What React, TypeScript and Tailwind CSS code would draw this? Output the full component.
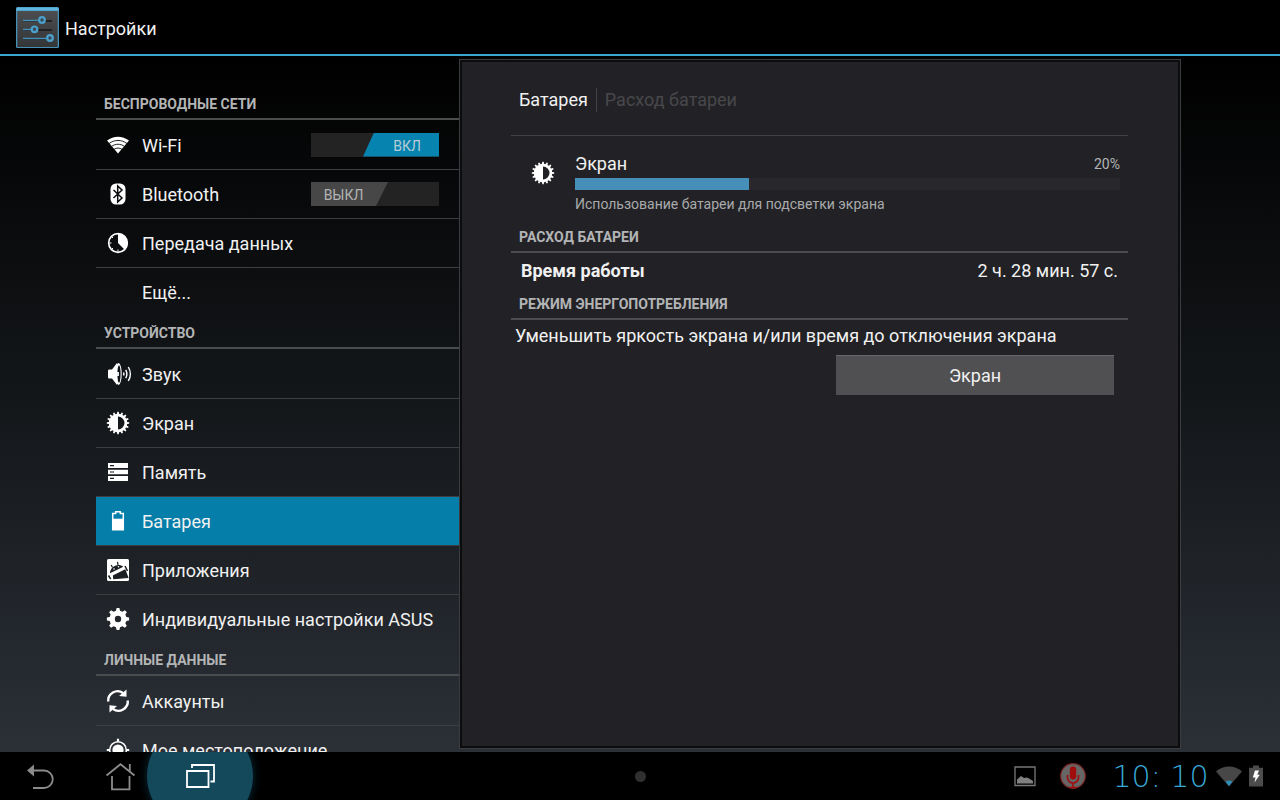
import type { ReactNode } from "react";

type Item = {
  title: string;
  icon?: string;
  toggle?: "on" | "off";
  active?: boolean;
};

const sections: { title: string; items: Item[] }[] = [
  {
    title: "БЕСПРОВОДНЫЕ СЕТИ",
    items: [
      { title: "Wi-Fi", icon: "wifi", toggle: "on" },
      { title: "Bluetooth", icon: "bluetooth", toggle: "off" },
      { title: "Передача данных", icon: "data" },
      { title: "Ещё..." },
    ],
  },
  {
    title: "УСТРОЙСТВО",
    items: [
      { title: "Звук", icon: "sound" },
      { title: "Экран", icon: "display" },
      { title: "Память", icon: "storage" },
      { title: "Батарея", icon: "battery", active: true },
      { title: "Приложения", icon: "apps" },
      { title: "Индивидуальные настройки ASUS", icon: "gear" },
    ],
  },
  {
    title: "ЛИЧНЫЕ ДАННЫЕ",
    items: [
      { title: "Аккаунты", icon: "sync" },
      { title: "Мое местоположение", icon: "location" },
    ],
  },
];

// closed outline of a toothed wheel around 12,12
function wheel(teeth: number, outer: number, inner: number, tip: number, root: number) {
  const step = (Math.PI * 2) / teeth;
  const points: string[] = [];
  for (let i = 0; i < teeth; i++) {
    const mid = i * step - Math.PI / 2;
    const corners = [
      [mid - root * step, inner],
      [mid - tip * step, outer],
      [mid + tip * step, outer],
      [mid + root * step, inner],
    ];
    for (const [angle, r] of corners) {
      points.push(
        `${(12 + Math.cos(angle) * r).toFixed(2)} ${(12 + Math.sin(angle) * r).toFixed(2)}`,
      );
    }
  }
  return `M${points.join("L")}Z`;
}

const sunPath = wheel(16, 11.2, 9.2, 0.16, 0.3);
const gearPath = wheel(8, 11.2, 8.6, 0.16, 0.3);

const icons: Record<string, ReactNode> = {
  wifi: (
    <>
      <path d="M1 7.6C7.5 2.4 16.5 2.4 23 7.6L12 20.5Z" fill="currentColor" />
      <path
        d="M3 10.6c5.4-4.2 12.6-4.2 18 0M5.4 13.5c4-3 9.2-3 13.2 0M8 16.4c2.5-1.8 5.5-1.8 8 0"
        fill="none"
        stroke="#0a0b0c"
        strokeWidth="0.9"
      />
    </>
  ),
  bluetooth: (
    <>
      <rect x="4.5" y="1.5" width="15" height="21" rx="5.5" fill="currentColor" />
      <path
        d="M7.5 8l8.5 8-4.3 4V4L16 8l-8.5 8"
        fill="none"
        stroke="#0b0c0e"
        strokeWidth="1.5"
      />
    </>
  ),
  data: (
    <>
      <circle cx="12" cy="12" r="9.3" fill="none" stroke="currentColor" strokeWidth="1.7" />
      <path d="M12 12V2.5a9.5 9.5 0 0 1 6.7 16.2Z" fill="currentColor" />
      <path
        d="M12 18.500v2M3.500 12h2M5.600 5.600l1.400 1.400M5.600 18.400l1.400-1.400"
        stroke="currentColor"
        strokeWidth="1"
      />
    </>
  ),
  sound: (
    <>
      <path d="M2 9c0-1 .5-1.5 1.5-1.5H6L11 1v22l-5-6.5H3.5C2.5 16.5 2 16 2 15Z" fill="currentColor" />
      <ellipse cx="12.5" cy="12" rx="3.2" ry="11" fill="currentColor" />
      <ellipse cx="13" cy="12" rx="1.600" ry="8.8" fill="#111416" />
      <path d="M12 10v4" stroke="currentColor" strokeWidth="1.8" />
      <path
        d="M17.5 10.5q1 1.5 0 3M19.7 7.8q2.4 4.2 0 8.4M22.3 5q4.2 7 0 14"
        fill="none"
        stroke="currentColor"
        strokeWidth="1.4"
      />
    </>
  ),
  display: (
    <path
      fillRule="evenodd"
      d={`${sunPath}M12 5.5a6.5 6.5 0 0 1 0 13Z`}
      fill="currentColor"
    />
  ),
  storage: (
    <path
      fillRule="evenodd"
      d="M2 3h20v5H2ZM4 5v1.2h4V5ZM2 9.7h20v4.6H2ZM4 11.4v1.2h4v-1.2ZM2 16h20v5H2ZM4 17.8V19h4v-1.2Z"
      fill="currentColor"
    />
  ),
  battery: (
    <>
      <path
        d="M9.7 4.5V2.7h4.6v1.8h3v16.3H6.7V4.5Z"
        fill="none"
        stroke="currentColor"
        strokeWidth="1.5"
      />
      <path d="M6.5 9.7h11V21h-11Z" fill="currentColor" />
    </>
  ),
  apps: (
    <>
      <rect x="1" y="1" width="22" height="22" rx="1.5" fill="currentColor" />
      <path d="M4 15.3C3.600 9.500 12 4 17.300 8.800Z" fill="#1b1e22" />
      <path d="M6.500 9.500 5.200 7M12 7l-.5-3.200M7.500 17.800 19 12.200l2.800 7.300-14 1Z" stroke="#1b1e22" strokeWidth="1.200" fill="#1b1e22" />
      <path d="M2.500 17.500l2.200 3.700M19 8l2.500 5" stroke="#1b1e22" strokeWidth="1.500" />
      <circle cx="8" cy="11" r="0.800" fill="currentColor" />
      <circle cx="12.500" cy="8.800" r="0.800" fill="currentColor" />
    </>
  ),
  gear: (
    <path
      fillRule="evenodd"
      d={`${gearPath}M12 8.800a3.200 3.200 0 1 0 0 6.400 3.200 3.200 0 0 0 0-6.400Z`}
      fill="currentColor"
    />
  ),
  sync: (
    <>
      <path
        d="M2.2 12.5A9.5 9.5 0 0 1 17 3.9M21.8 11.5A9.5 9.5 0 0 1 7 20.1"
        fill="none"
        stroke="currentColor"
        strokeWidth="2.4"
      />
      <path d="M20.5 0.5v7.3l-7.5-.8ZM3.5 23.5v-7.3l7.5.8Z" fill="currentColor" />
    </>
  ),
  location: (
    <>
      <circle cx="12" cy="12" r="5.6" fill="currentColor" />
      <circle cx="12" cy="12" r="8.3" fill="none" stroke="currentColor" strokeWidth="1.5" />
      <path d="M12 0.8V4M12 20v3.2M0.8 12H4M20 12h3.2" stroke="currentColor" strokeWidth="2.2" />
    </>
  ),
};

function Icon({ name }: { name?: string }) {
  return (
    <svg viewBox="0 0 24 24" className="size-6 shrink-0 overflow-visible text-white" aria-hidden="true">
      {name ? icons[name] : null}
    </svg>
  );
}

function Toggle({ on, label }: { on: boolean; label: string }) {
  return (
    <label className="relative flex h-6 w-32 cursor-pointer bg-[#232323] text-sm text-[#b4b4b4]">
      <input type="checkbox" role="switch" defaultChecked={on} aria-label={label} className="sr-only" />
      {on ? (
        <span className="ml-auto flex w-[76px] items-center justify-center bg-[#0783b0] pt-[2px] pl-3 text-[#b9cdd6] [clip-path:polygon(11px_0,100%_0,100%_100%,0_100%)]">
          ВКЛ
        </span>
      ) : (
        <span className="flex w-[77px] items-center justify-center bg-[#474747] pt-[2px] pr-3 [clip-path:polygon(0_0,100%_0,65px_100%,0_100%)]">
          ВЫКЛ
        </span>
      )}
    </label>
  );
}

function SectionTitle({ children }: { children: ReactNode }) {
  return (
    <h2 className="flex h-[33px] items-center border-b-2 border-[#4b4c4e] px-2 pt-[2px] text-sm font-bold text-[#b3b4b5]">
      {children}
    </h2>
  );
}

function SettingsList() {
  return (
    <nav className="min-w-0 overflow-hidden pt-[31px]" aria-label="Настройки">
      {sections.map((section) => (
        <section key={section.title}>
          <SectionTitle>{section.title}</SectionTitle>
          <ul>
            {section.items.map((item) => (
              <li
                key={item.title}
                className={`flex h-[49px] items-center border-[#3c3e41] pr-5 pl-[10px] not-first:border-t ${item.active ? "bg-[#057eaa]" : ""}`}
              >
                <a href="#" className="flex flex-1 items-center gap-3 whitespace-nowrap">
                  <Icon name={item.icon} />
                  <span className="pt-[2px]">{item.title}</span>
                </a>
                {item.toggle && <Toggle on={item.toggle === "on"} label={item.title} />}
              </li>
            ))}
          </ul>
        </section>
      ))}
    </nav>
  );
}

function BatteryPanel() {
  return (
    <div className="my-[3px] flex min-w-0 border border-[#3b3c3f] bg-[#0b0c0d] p-[2px]">
      <div className="flex-1 bg-[#222226] pr-[50px] pl-[49px]">
        <div className="flex h-[74px] items-center border-b border-[#434347] px-2 pt-[2px]">
          <h1 className="pr-2">Батарея</h1>
          <span className="border-l border-[#434347] pl-2 text-[#48484b]">Расход батареи</span>
        </div>

        <div className="flex h-[84px] items-start pt-[14px] pr-2 pl-5">
          <div className="pt-[11px]">
            <Icon name="display" />
          </div>
          <div className="flex-1 pl-5">
            <div className="flex h-7 items-center justify-between">
              <span id="screen-use">Экран</span>
              <span className="text-sm text-[#b3b4b5]">20%</span>
            </div>
            <div
              role="progressbar"
              aria-labelledby="screen-use"
              aria-valuenow={32}
              className="h-3 bg-[#28282c]"
            >
              <div className="h-full w-[32%] bg-[#468fb9]" />
            </div>
            <p className="pt-1 text-sm text-[#a9aaab]">Использование батареи для подсветки экрана</p>
          </div>
        </div>

        <SectionTitle>РАСХОД БАТАРЕИ</SectionTitle>
        <dl className="flex h-[34px] items-center justify-between px-[10px] pt-[2px]">
          <dt className="font-bold">Время работы</dt>
          <dd>2 ч. 28 мин. 57 с.</dd>
        </dl>

        <SectionTitle>РЕЖИМ ЭНЕРГОПОТРЕБЛЕНИЯ</SectionTitle>
        <p className="h-[35px] px-1 pt-1">
          Уменьшить яркость экрана и/или время до отключения экрана
        </p>
        <div className="flex justify-end pr-[14px]">
          <button className="h-10 w-[278px] border-t border-[#68686a] bg-[#505052]">Экран</button>
        </div>
      </div>
    </div>
  );
}

function SystemBar() {
  return (
    <footer className="grid h-12 shrink-0 grid-cols-[1fr_auto_1fr] items-center overflow-hidden bg-black">
      <div className="flex">
        <button className="flex h-12 w-20 items-center justify-center" aria-label="Назад">
          <svg viewBox="0 0 32 32" className="size-8" fill="none" stroke="#8b8b8b" strokeWidth="1.8">
            <path d="M9 10.5h11a8.7 8.7 0 0 1 0 17.5h-11" />
            <path d="M10 4.5v12l-7-6Z" fill="#8b8b8b" stroke="none" />
          </svg>
        </button>
        <button className="flex h-12 w-20 items-center justify-center" aria-label="Домой">
          <svg viewBox="0 0 32 32" className="size-8" fill="none" stroke="#8b8b8b" strokeWidth="1.8">
            <path d="M2.500 15.500 16.500 4.200l14 11.300M25.800 4v8M8 16v13.300h17.500V16" />
          </svg>
        </button>
        <button className="relative flex h-12 w-20 items-center justify-center" aria-label="Недавние">
          <span className="absolute -inset-x-[13px] -inset-y-[29px] rounded-full bg-[#13495b] shadow-[0_0_10px_#0b2d39]" />
          <svg viewBox="0 0 32 32" className="relative size-8" fill="none" stroke="white" strokeWidth="1.8">
            <path d="M3 11h21.500v16H3ZM8 8V5h22v16.500h-3.500" />
          </svg>
        </button>
      </div>
      <span className="size-[11px] rounded-full bg-[#303030]" />
      <div className="flex items-center justify-end pr-4">
        <svg viewBox="0 0 24 24" className="mr-[22px] size-6" aria-hidden="true">
          <path d="M2 3h20v18.500H2Z" fill="none" stroke="#777" strokeWidth="1.3" />
          <path d="M4 19.500v-4l4-3.500 3 2 3-.5 3 1.500 3 2v2.500Z" fill="#808080" />
        </svg>
        <svg viewBox="0 0 28 28" className="mr-[22px] size-7" aria-hidden="true">
          <circle cx="14" cy="14" r="12.3" fill="#666" stroke="#7c2727" strokeWidth="1.2" />
          <rect x="10.8" y="4.5" width="6.4" height="13" rx="3" fill="#a00d0d" />
          <path d="M8.500 13v2.500a5.500 5.500 0 0 0 11 0V13M14 20.500V26M10 25.500h8" fill="none" stroke="#a00d0d" strokeWidth="1.6" />
        </svg>
        <time className="min-w-[103px] pt-[2px] text-center font-['DejaVu_Sans_Light','DejaVu_Sans',sans-serif] text-[30px] leading-8 font-extralight whitespace-nowrap text-[#38a8d8]">
          10: 10
        </time>
        <svg viewBox="0 0 26 22" className="ml-1 h-[22px] w-[26px]" aria-hidden="true">
          <path d="M0 6.500C7.500-.3 18.500-.3 26 6.500L13 21.500Z" fill="#474747" />
          <path d="M9.700 16.700c2-1.500 4.600-1.500 6.600 0L13 21Z" fill="#2c8fb8" />
        </svg>
        <svg viewBox="0 0 16 22" className="ml-[6px] h-[22px] w-4" aria-hidden="true">
          <path d="M5 0.500h6v2.200h4V21.500H1V2.700h4Z" fill="#4c4c4c" />
          <path d="M7 5.500h4L9.300 9.800h2.500L6.500 17.500l1-5H4.800Z" fill="white" />
        </svg>
      </div>
    </footer>
  );
}

export default function App() {
  return (
    <div className="flex h-screen flex-col overflow-hidden bg-black font-['Roboto','Noto_Sans',sans-serif] text-lg leading-6 text-[#f1f1f1]">
      <header className="flex h-14 shrink-0 items-center gap-[5px] border-b-2 border-[#3ba7cf] bg-black pl-[15px]">
        <svg viewBox="0 0 45 44" className="h-11 w-[45px]" aria-hidden="true">
          <defs>
            <linearGradient id="tile" x1="0" y1="0" x2="0" y2="1">
              <stop offset="0" stopColor="#4c4d4f" />
              <stop offset="1" stopColor="#343536" />
            </linearGradient>
          </defs>
          <rect x="1" y="2" width="43" height="41" rx="1.5" fill="#4690b8" />
          <path d="M2 2.500h41l1 3H1Z" fill="#5db5e0" />
          <path d="M2.300 6h40.400v36H2.300Z" fill="url(#tile)" />
          <path d="M8 16h29M8 25h29M8 34h29" stroke="#222" strokeWidth="2" />
          <path d="M8 15.500h17M8 24.500h10M8 33.500h25" stroke="#4690b8" strokeWidth="1.5" />
          <g fill="#374854" stroke="#4ba0cc" strokeWidth="2.2">
            <circle cx="27" cy="15" r="2.8" />
            <circle cx="19.5" cy="24.3" r="2.8" />
            <circle cx="35" cy="33" r="2.8" />
          </g>
        </svg>
        <span className="pt-1">Настройки</span>
      </header>
      <main className="grid min-h-0 flex-1 grid-cols-[363px_1fr] bg-linear-to-b/srgb from-black via-[#14171a] to-[#2b3037] pr-[99px] pl-24">
        <SettingsList />
        <BatteryPanel />
      </main>
      <SystemBar />
    </div>
  );
}
